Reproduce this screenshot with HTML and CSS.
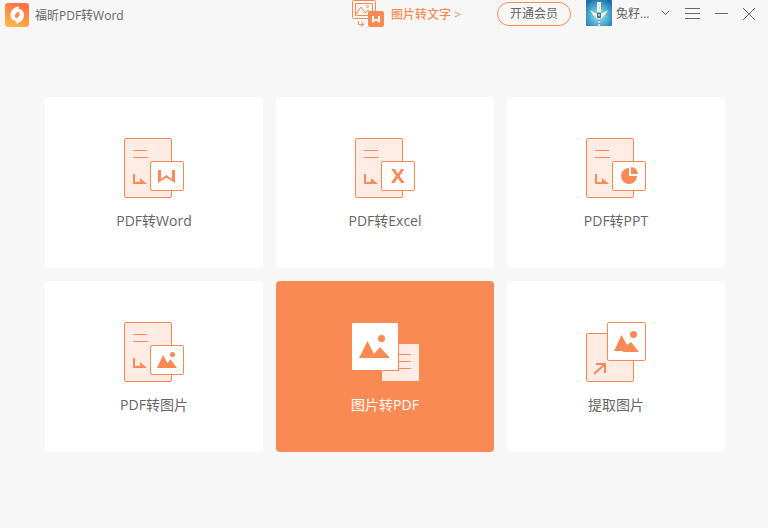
FILE: index.html
```html
<!doctype html>
<html lang="zh-CN">

<head>
  <meta charset="utf-8">
  <title>福昕PDF转Word</title>
  <meta name="viewport" content="width=device-width, initial-scale=1">
  <link rel="stylesheet" href="styles.css">
</head>

<body>
  <!-- shared shapes -->
  <svg class="defs" width="0" height="0" aria-hidden="true">
    <symbol id="doc" viewBox="0 0 60 60">
      <rect class="paper" x="0.5" y="0.5" width="47" height="59" rx="1.5"/>
      <path class="line" d="M9 12.5h14M9 19.5h15"/>
      <path class="solid" d="M9 36h2v8h5v-4l7 6H9z"/>
      <rect class="badge" x="26.5" y="23.5" width="33" height="29" rx="1.5"/>
    </symbol>
  </svg>

  <header class="titlebar">
    <div class="brand">
      <svg width="24" height="24" viewBox="0 0 24 24" aria-hidden="true">
        <defs>
          <linearGradient id="logo-bg" x1="0" y1="1" x2="0.4" y2="0">
            <stop offset="0" stop-color="#ffbd45"/>
            <stop offset="1" stop-color="#ff7548"/>
          </linearGradient>
        </defs>
        <rect width="24" height="24" rx="3" fill="url(#logo-bg)"/>
        <path fill="#fff" d="M14 3.5L13.5 6c4 .5 6 3.500 5.500 7-.5 4-4 7-8.500 7.500l.5-2.500c-4-.5-6-3.500-5.500-7C6 7 9.500 4 14 3.500z"/>
        <path fill="#ff8a48" d="M13.500 8.500c2 2.500 1 5.500-2.500 7-2-2.500-1-5.500 2.500-7z"/>
      </svg>
      <span>福昕PDF转Word</span>
    </div>

    <div class="tools">
      <a class="promo" href="#">
        <svg width="32" height="28" viewBox="0 0 32 28" aria-hidden="true">
          <rect class="outline" x="0.5" y="0.5" width="23" height="18" rx="1"/>
          <path class="outline" d="M3.500 3.500h17v12h-17zM4 14l5-7 4 6 3-3 4 5M6.500 21v3.500h5M9 22l2.500 2.500L9 27"/>
          <circle class="outline" cx="15.500" cy="6.500" r="1"/>
          <rect class="solid" x="16" y="11" width="16" height="16" rx="2"/>
          <path class="mark" d="M20 16h2v4l2-1.500 2 1.500v-4h2v7l-4-2.500-4 2.500z"/>
        </svg>
        <span>图片转文字 &gt;</span>
      </a>
      <button class="vip" type="button">开通会员</button>
      <button class="user" type="button">
        <svg width="26" height="26" viewBox="0 0 26 26" aria-hidden="true">
          <defs>
            <radialGradient id="avatar-bg" cy="0.6" r="0.7">
              <stop offset="0" stop-color="#a5e4ee"/>
              <stop offset="0.5" stop-color="#4fb0d3"/>
              <stop offset="1" stop-color="#1a6aa8"/>
            </radialGradient>
          </defs>
          <rect width="26" height="26" rx="1" fill="url(#avatar-bg)"/>
          <path fill="#fdf6e4" d="M11 2h4v10h-4z"/>
          <path fill="#f3c9bb" d="M12 4h1v2h-1zM13 7h1v2h-1z"/>
          <path fill="#f6f3dc" d="M4 10l7 4v3l-4-2zM22 10l-7 4v3l4-2z"/>
          <path fill="#d8f0f2" d="M7 15l4 2v2zM19 15l-4 2v2z"/>
          <path fill="#54748a" d="M11 13h4v4l-2 2-2-2z"/>
          <path fill="#8fd3c9" d="M12 14h2v2h-2z"/>
          <path fill="#e6d9df" d="M12 18h2v8h-2z"/>
          <path fill="#c96d75" d="M12 20h2v1h-2zM12 23h2v1h-2z"/>
        </svg>
        <span class="name">兔籽...</span>
        <svg class="chevron" width="9" height="6" viewBox="0 0 9 6" aria-hidden="true"><path class="stroke" d="M0.500 0.500l4 4 4-4"/></svg>
      </button>
      <div class="window">
        <button type="button" aria-label="菜单">
          <svg width="15" height="12" viewBox="0 0 15 12"><path class="stroke" d="M0 0.500h15M0 5.500h15M0 10.500h15"/></svg>
        </button>
        <button type="button" aria-label="最小化">
          <svg width="13" height="12" viewBox="0 0 13 12"><path class="stroke" d="M0 5.500h13"/></svg>
        </button>
        <button type="button" aria-label="关闭">
          <svg width="12" height="12" viewBox="0 0 12 12"><path class="stroke" d="M0 0l12 12M12 0L0 12"/></svg>
        </button>
      </div>
    </div>
  </header>

  <main class="cards">
    <button class="card" type="button">
      <svg width="60" height="60" viewBox="0 0 60 60" aria-hidden="true">
        <use href="#doc"/>
        <path class="solid" d="M34 32h3v9l5.500-4 5.500 4v-9h3v13l-8.500-5.500L34 45z"/>
      </svg>
      <span>PDF转Word</span>
    </button>
    <button class="card" type="button">
      <svg width="60" height="60" viewBox="0 0 60 60" aria-hidden="true">
        <use href="#doc"/>
        <text class="mark-x" x="43" y="45" text-anchor="middle">X</text>
      </svg>
      <span>PDF转Excel</span>
    </button>
    <button class="card" type="button">
      <svg width="60" height="60" viewBox="0 0 60 60" aria-hidden="true">
        <use href="#doc"/>
        <path class="solid" d="M43 30v8h8a8 8 0 1 1-8-8z"/>
        <path class="solid" d="M45 29a7 7 0 0 1 7 7h-7z"/>
      </svg>
      <span>PDF转PPT</span>
    </button>
    <button class="card" type="button">
      <svg width="60" height="60" viewBox="0 0 60 60" aria-hidden="true">
        <use href="#doc"/>
        <path class="solid" d="M33 46l6-13 4.500 8 3-3.500L53 46z"/>
        <circle class="solid" cx="48.500" cy="32.500" r="2.500"/>
      </svg>
      <span>PDF转图片</span>
    </button>
    <button class="card active" type="button">
      <svg width="68" height="60" viewBox="0 0 68 60" aria-hidden="true">
        <path fill="#feece5" d="M31 22h37v37H31z"/>
        <path class="line" d="M48 32.500h12M48 39.500h12M48 46.500h12"/>
        <path class="solid" d="M0 0h48v49H0z"/>
        <rect x="1" y="1" width="46" height="47" rx="1" fill="#fff"/>
        <path class="solid" d="M8 36l8.500-17L23 32l6-7 10 11z"/>
        <circle class="solid" cx="30.500" cy="16.500" r="3.500"/>
      </svg>
      <span>图片转PDF</span>
    </button>
    <button class="card" type="button">
      <svg width="60" height="60" viewBox="0 0 60 60" aria-hidden="true">
        <rect class="paper" x="0.500" y="11.500" width="47" height="48" rx="1.500"/>
        <rect class="badge" x="21.500" y="0.500" width="38" height="38" rx="1.500"/>
        <path class="arrow" d="M8 52l11-10M10 42h9v9"/>
        <path class="solid" d="M28 29l7.500-16 5.500 10 4-3 8 10H37v-1z"/>
        <circle class="solid" cx="47.500" cy="12.500" r="3.500"/>
      </svg>
      <span>提取图片</span>
    </button>
  </main>
</body>

</html>
```

FILE: styles.css
```css
body {
  margin: 0;
  background: #f7f7f7;
  color: #666;
  font-family: "Open Sans", "Noto Sans CJK SC", sans-serif;
  font-size: 12px;
}
button {
  margin: 0;
  padding: 0;
  border: 0;
  background: none;
  color: inherit;
  font: inherit;
  cursor: pointer;
}
svg {
  display: block;
  flex: none;
}
.defs {
  position: absolute;
}

/* title bar */
.titlebar {
  display: flex;
  justify-content: space-between;
  align-items: center;
  height: 28px;
  padding: 0 13px 0 5px;
  white-space: nowrap;
}
.brand {
  display: flex;
  align-items: center;
  gap: 6px;
  padding-top: 2px;
}
.tools, .promo, .user, .window {
  display: flex;
  align-items: center;
}
.promo {
  gap: 7px;
  margin-right: 36px;
  color: #fa8a54;
  font-weight: 500;
  text-decoration: none;
}
.vip {
  box-sizing: border-box;
  width: 74px;
  height: 24px;
  margin-right: 15px;
  border: 1px solid #fa8a54;
  border-radius: 12px;
  line-height: 20px;
}
.user {
  height: 28px;
  padding-bottom: 2px;
  box-sizing: border-box;
}
.name {
  width: 34px;
  margin-left: 4px;
  text-align: left;
}
.chevron {
  margin-left: 11px;
}
.window {
  gap: 15px;
  margin-left: 15px;
}

/* cards */
.cards {
  display: grid;
  grid-template-columns: repeat(3, 1fr);
  gap: 13px;
  padding: 69px 43px 76px 45px;
}
.card {
  display: flex;
  flex-direction: column;
  align-items: center;
  gap: 13px;
  padding: 41px 0 37px;
  border-radius: 4px;
  background: #fff;
  font-size: 14px;
  line-height: 20px;
}
.card.active {
  background: #fa8a54;
  color: #fff;
}

/* icon parts */
.paper {
  fill: #feece5;
  stroke: #fa8a54;
}
.badge {
  fill: #fff;
  stroke: #fa8a54;
}
.solid {
  fill: #fa8a54;
}
.line, .outline {
  fill: none;
  stroke: #fa8a54;
}
.stroke {
  fill: none;
  stroke: #666;
}
.arrow {
  fill: none;
  stroke: #fa8a54;
  stroke-width: 2;
}
.mark {
  fill: #fff;
}
.mark-x {
  fill: #fa8a54;
  font-family: "Open Sans", sans-serif;
  font-size: 20px;
  font-weight: 700;
}
```
